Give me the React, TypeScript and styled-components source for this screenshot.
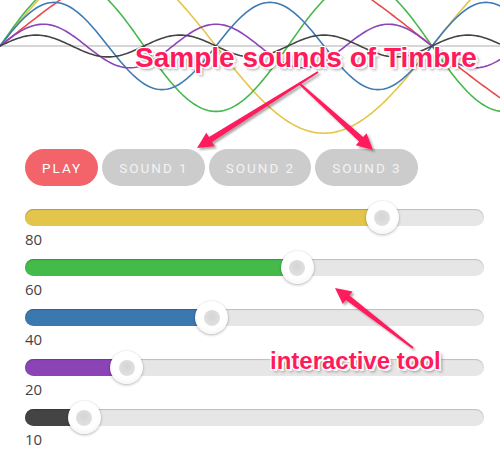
import React from "react";
import styled, { createGlobalStyle } from "styled-components";

const Global = createGlobalStyle`
  html, body { margin: 0; padding: 0; background: #ffffff; }
  body { width: 500px; height: 452px; overflow: hidden; font-family: "Open Sans", "Liberation Sans", sans-serif; }
`;

const Page = styled.div`
  position: relative;
  width: 500px;
  height: 452px;
  overflow: hidden;
`;

const Chart = styled.svg`
  display: block;
  width: 500px;
  height: 149px;
`;

const ButtonRow = styled.div`
  display: flex;
  gap: 4px;
  padding-left: 25px;
  height: 37px;
`;

const SoundButton = styled.button<{ $active?: boolean }>`
  height: 37px;
  border: none;
  border-radius: 19px;
  padding: 0 16px 0 17px;
  margin: 0;
  background: ${(p) => (p.$active ? "#f2646a" : "#cccccc")};
  color: ${(p) => (p.$active ? "#ffffff" : "#f3f3f3")};
  font-family: Roboto, "Liberation Sans", sans-serif;
  font-weight: 400;
  font-size: 13.5px;
  letter-spacing: 2px;
  cursor: pointer;
`;

const Sliders = styled.div`
  display: flex;
  flex-direction: column;
  gap: 10px;
  padding: 23px 0 0 25px;
  width: 459px;
`;

const SliderRow = styled.div`
  display: flex;
  flex-direction: column;
`;

const Track = styled.div`
  position: relative;
  height: 17px;
  border-radius: 9px;
  background: #e6e6e6;
  box-shadow: inset 0 1px 1px rgba(0, 0, 0, 0.18);
`;

const Fill = styled.div<{ $color: string }>`
  position: absolute;
  left: 0;
  top: 0;
  bottom: 0;
  border-radius: 9px 0 0 9px;
  background: ${(p) => p.$color};
  box-shadow: inset 0 1px 1px rgba(0, 0, 0, 0.2);
`;

const Thumb = styled.div`
  position: absolute;
  top: -8px;
  width: 33px;
  height: 33px;
  margin-left: -16.5px;
  border-radius: 50%;
  background: radial-gradient(circle at 50% 40%, #ffffff 55%, #ececec 100%);
  box-shadow: 0 1px 3px rgba(0, 0, 0, 0.28), 0 0 1px rgba(0, 0, 0, 0.2);
  display: flex;
  align-items: center;
  justify-content: center;
`;

const ThumbDot = styled.div`
  width: 16px;
  height: 16px;
  border-radius: 50%;
  background: radial-gradient(circle at 50% 40%, #d4d4d4 0%, #e0e0e0 70%, #ebebeb 100%);
`;

const ValueLabel = styled.div`
  margin-top: 3px;
  font-family: "Open Sans", "Liberation Sans", sans-serif;
  font-size: 15px;
  line-height: 20px;
  color: #444444;
`;

const Callout = styled.div<{ $size: number }>`
  position: absolute;
  font-family: "Liberation Sans", Arial, sans-serif;
  font-weight: 700;
  font-size: ${(p) => p.$size}px;
  line-height: 1;
  white-space: nowrap;
  color: #ff1a5c;
  text-shadow:
    1px 0 0 #fff, -1px 0 0 #fff, 0 1px 0 #fff, 0 -1px 0 #fff,
    1px 1px 0 #fff, -1px -1px 0 #fff, 1px -1px 0 #fff, -1px 1px 0 #fff,
    2px 2px 0 #fff,
    3px 3px 3px rgba(0, 0, 0, 0.35);
`;

const Overlay = styled.svg`
  position: absolute;
  left: 0;
  top: 0;
  width: 500px;
  height: 452px;
  pointer-events: none;
`;

const AXIS = 46;
const SPAN = 432;

const waves = [
  { n: 1, v: 100, color: "#e84c4c" },
  { n: 2, v: 80, color: "#e5c64a" },
  { n: 3, v: 60, color: "#46b84c" },
  { n: 4, v: 40, color: "#3e7ab4" },
  { n: 5, v: 20, color: "#8c45b6" },
  { n: 6, v: 10, color: "#444444" },
];

function wavePath(n: number, v: number) {
  const amp = v * 1.09;
  let d = "";
  for (let x = 0; x <= 500; x += 2) {
    const y = AXIS - amp * Math.sin((n * Math.PI * x) / SPAN);
    d += (x === 0 ? "M" : "L") + x + " " + y.toFixed(2) + " ";
  }
  return d;
}

function arrow(tx: number, ty: number, hx: number, hy: number) {
  const dx = hx - tx;
  const dy = hy - ty;
  const len = Math.hypot(dx, dy);
  const ux = dx / len;
  const uy = dy / len;
  const px = -uy;
  const py = ux;
  const headLen = 16;
  const headW = 8;
  const w0 = 1;
  const w1 = 3;
  const bx = hx - ux * headLen;
  const by = hy - uy * headLen;
  const pts = [
    [tx + px * w0, ty + py * w0],
    [bx + px * w1, by + py * w1],
    [bx + px * headW, by + py * headW],
    [hx, hy],
    [bx - px * headW, by - py * headW],
    [bx - px * w1, by - py * w1],
    [tx - px * w0, ty - py * w0],
  ];
  return pts.map((p) => p[0].toFixed(1) + "," + p[1].toFixed(1)).join(" ");
}

const sliders = [
  { v: 80, color: "#e2c54a" },
  { v: 60, color: "#43ba4a" },
  { v: 40, color: "#3c78b0" },
  { v: 20, color: "#8b44b5" },
  { v: 10, color: "#444444" },
];

const TRACK_W = 459;

export default function App() {
  return (
    <Page>
      <Global />
      <Chart viewBox="0 0 500 149">
        <line x1="0" y1={AXIS} x2="500" y2={AXIS} stroke="#c8c8c8" strokeWidth="1.5" />
        {waves.map((w) => (
          <path key={w.n} d={wavePath(w.n, w.v)} fill="none" stroke={w.color} strokeWidth="1.6" />
        ))}
      </Chart>
      <ButtonRow>
        <SoundButton $active>PLAY</SoundButton>
        <SoundButton>SOUND 1</SoundButton>
        <SoundButton>SOUND 2</SoundButton>
        <SoundButton>SOUND 3</SoundButton>
      </ButtonRow>
      <Sliders>
        {sliders.map((s, i) => {
          const c = 16.5 + (s.v / 100) * (TRACK_W - 33);
          return (
            <SliderRow key={i}>
              <Track>
                <Fill $color={s.color} style={{ width: c }} />
                <Thumb style={{ left: c }}>
                  <ThumbDot />
                </Thumb>
              </Track>
              <ValueLabel>{s.v}</ValueLabel>
            </SliderRow>
          );
        })}
      </Sliders>
      <Overlay viewBox="0 0 500 452">
        <defs>
          <filter id="sh" x="-20%" y="-20%" width="140%" height="140%">
            <feDropShadow dx="2" dy="2" stdDeviation="1.2" floodColor="#000" floodOpacity="0.35" />
          </filter>
        </defs>
        <g fill="#ff1a5c" filter="url(#sh)">
          <polygon points={arrow(318, 72, 197, 148)} />
          <polygon points={arrow(300, 84, 373, 150)} />
          <polygon points={arrow(413, 348, 335, 288)} />
        </g>
      </Overlay>
      <Callout $size={28} style={{ left: 135, top: 44 }}>Sample sounds of Timbre</Callout>
      <Callout $size={24} style={{ left: 270, top: 349 }}>interactive tool</Callout>
    </Page>
  );
}
